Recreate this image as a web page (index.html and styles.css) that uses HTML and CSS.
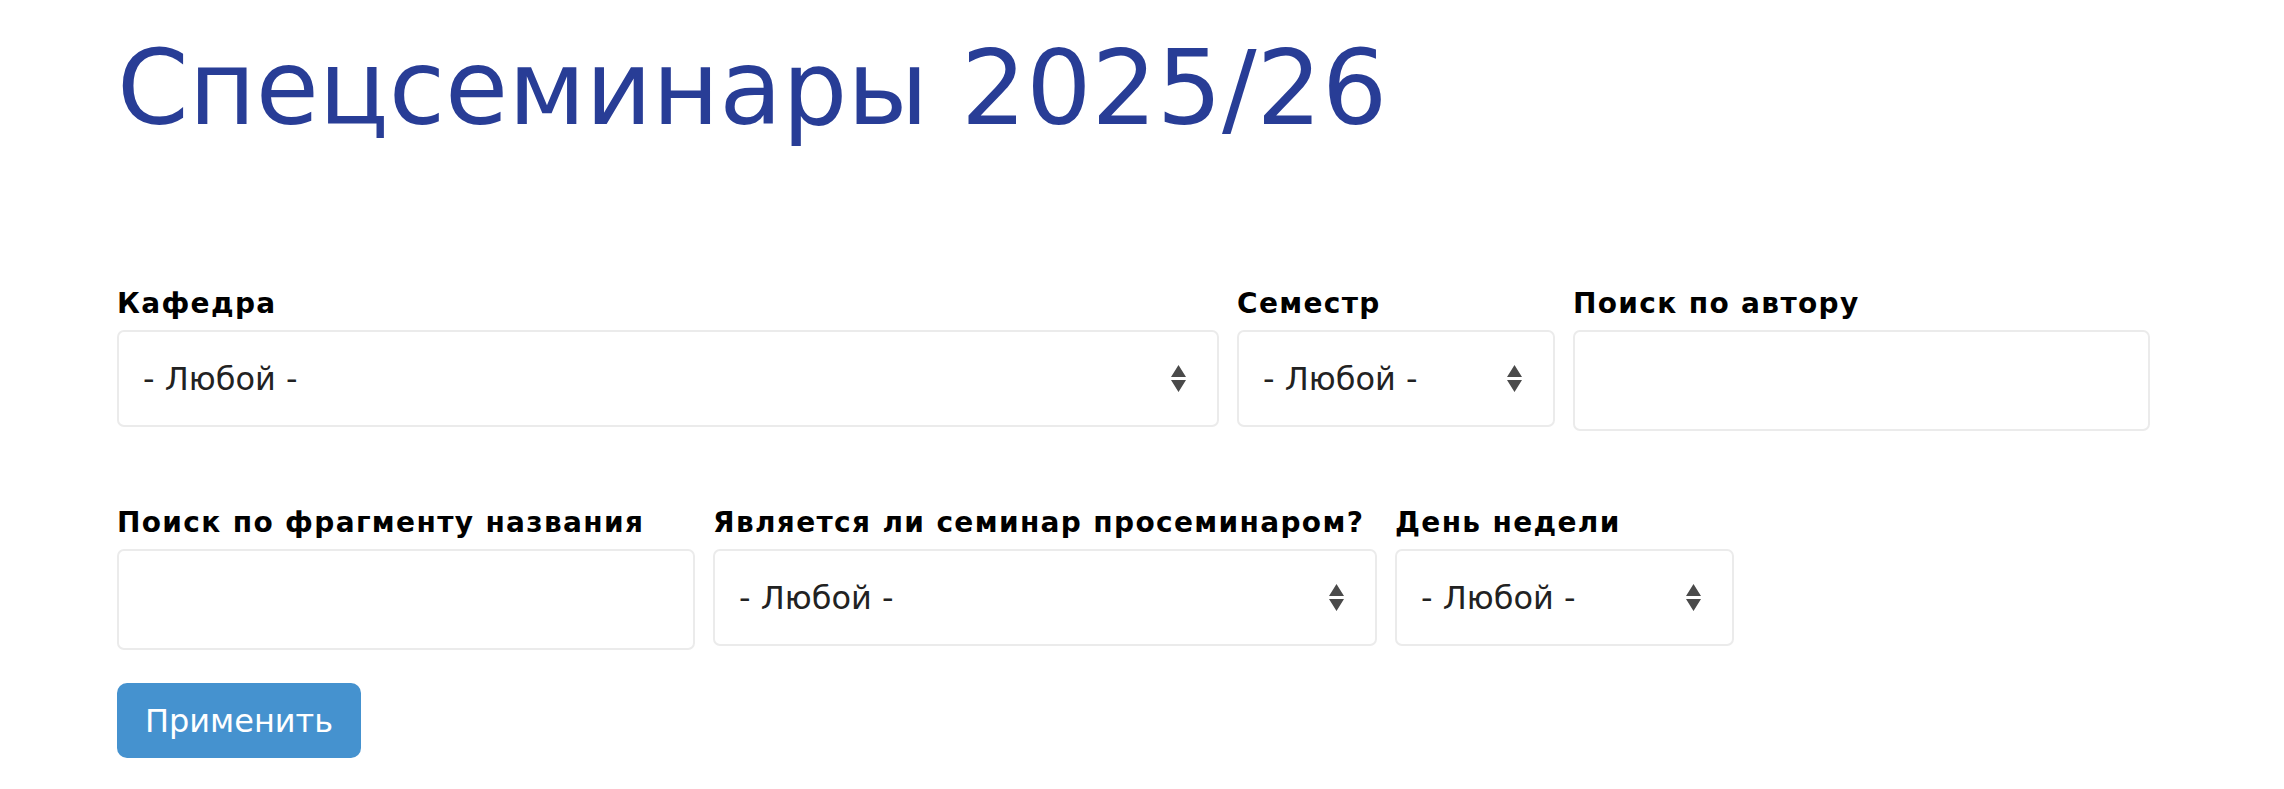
FILE: index.html
```html
<!DOCTYPE html>
<html lang="ru">
<head>
<meta charset="utf-8">
<title>Спецсеминары 2025/26</title>
<link rel="stylesheet" href="styles.css">
</head>
<body>
<main class="page">
  <h1 class="title">Спецсеминары 2025/26</h1>
  <form class="filters">
    <div class="row row-first">
      <div class="field f-kafedra">
        <label class="label">Кафедра</label>
        <div class="select"><span class="select-text">- Любой -</span><svg class="arrows" width="15" height="27" viewBox="0 0 15 27"><path d="M7.5 0 L15 12 L0 12 Z M0 15 L15 15 L7.5 27 Z" fill="#4a4a4a"/></svg></div>
      </div>
      <div class="field f-semestr">
        <label class="label">Семестр</label>
        <div class="select"><span class="select-text">- Любой -</span><svg class="arrows" width="15" height="27" viewBox="0 0 15 27"><path d="M7.5 0 L15 12 L0 12 Z M0 15 L15 15 L7.5 27 Z" fill="#4a4a4a"/></svg></div>
      </div>
      <div class="field f-author">
        <label class="label">Поиск по автору</label>
        <input class="input" type="text">
      </div>
    </div>
    <div class="row">
      <div class="field f-fragment">
        <label class="label">Поиск по фрагменту названия</label>
        <input class="input" type="text">
      </div>
      <div class="field f-proseminar">
        <label class="label">Является ли семинар просеминаром?</label>
        <div class="select"><span class="select-text">- Любой -</span><svg class="arrows" width="15" height="27" viewBox="0 0 15 27"><path d="M7.5 0 L15 12 L0 12 Z M0 15 L15 15 L7.5 27 Z" fill="#4a4a4a"/></svg></div>
      </div>
      <div class="field f-day">
        <label class="label">День недели</label>
        <div class="select"><span class="select-text">- Любой -</span><svg class="arrows" width="15" height="27" viewBox="0 0 15 27"><path d="M7.5 0 L15 12 L0 12 Z M0 15 L15 15 L7.5 27 Z" fill="#4a4a4a"/></svg></div>
      </div>
    </div>
    <button class="apply" type="button">Применить</button>
  </form>
</main>
</body>
</html>
```

FILE: styles.css
```css
html, body {
  margin: 0;
  padding: 0;
  background: #ffffff;
}

body {
  font-family: "DejaVu Sans", "Noto Sans", sans-serif;
  color: #000;
}

.page {
  padding: 27px 0 0 117px;
}

.title {
  margin: 0;
  font-family: "DejaVu Sans", sans-serif;
  font-weight: 400;
  font-size: 102.6px;
  line-height: 1.2;
  color: #283d96;
}

.filters {
  margin-top: 136px;
}

.row {
  display: flex;
  align-items: flex-start;
  gap: 18px;
}

.row + .row {
  margin-top: 74px;
}

.field {
  display: flex;
  flex-direction: column;
}

.label {
  display: block;
  font-family: "DejaVu Sans", sans-serif;
  font-weight: 700;
  font-size: 28px;
  line-height: 36px;
  letter-spacing: 1.35px;
  color: #000;
  margin-bottom: 8px;
  white-space: nowrap;
}

.select {
  box-sizing: border-box;
  height: 97px;
  border: 2px solid #ebebeb;
  border-radius: 7px;
  background: #fff;
  display: flex;
  align-items: center;
  justify-content: space-between;
  padding: 0 31px 0 24px;
}

.select-text {
  font-family: "DejaVu Sans", sans-serif;
  font-size: 32px;
  color: #222;
  white-space: nowrap;
}

.arrows {
  display: block;
  flex: none;
}

.input {
  box-sizing: border-box;
  height: 101px;
  border: 2px solid #ebebeb;
  border-radius: 7px;
  background: #fff;
  margin: 0;
  padding: 0 24px;
  font-family: "DejaVu Sans", sans-serif;
  font-size: 32px;
  outline: none;
}

.f-kafedra { width: 1102px; }
.f-semestr { width: 318px; }
.f-author { width: 577px; }
.f-fragment { width: 578px; }
.f-proseminar { width: 664px; }
.f-day { width: 339px; }

.f-author .input,
.f-fragment .input {
  width: 100%;
}

.apply {
  display: block;
  margin-top: 33px;
  box-sizing: border-box;
  width: 244px;
  height: 75px;
  border: none;
  border-radius: 10px;
  background: #4592cf;
  color: #fff;
  font-family: "DejaVu Sans", sans-serif;
  font-size: 32px;
  padding: 0;
  cursor: pointer;
}
```
